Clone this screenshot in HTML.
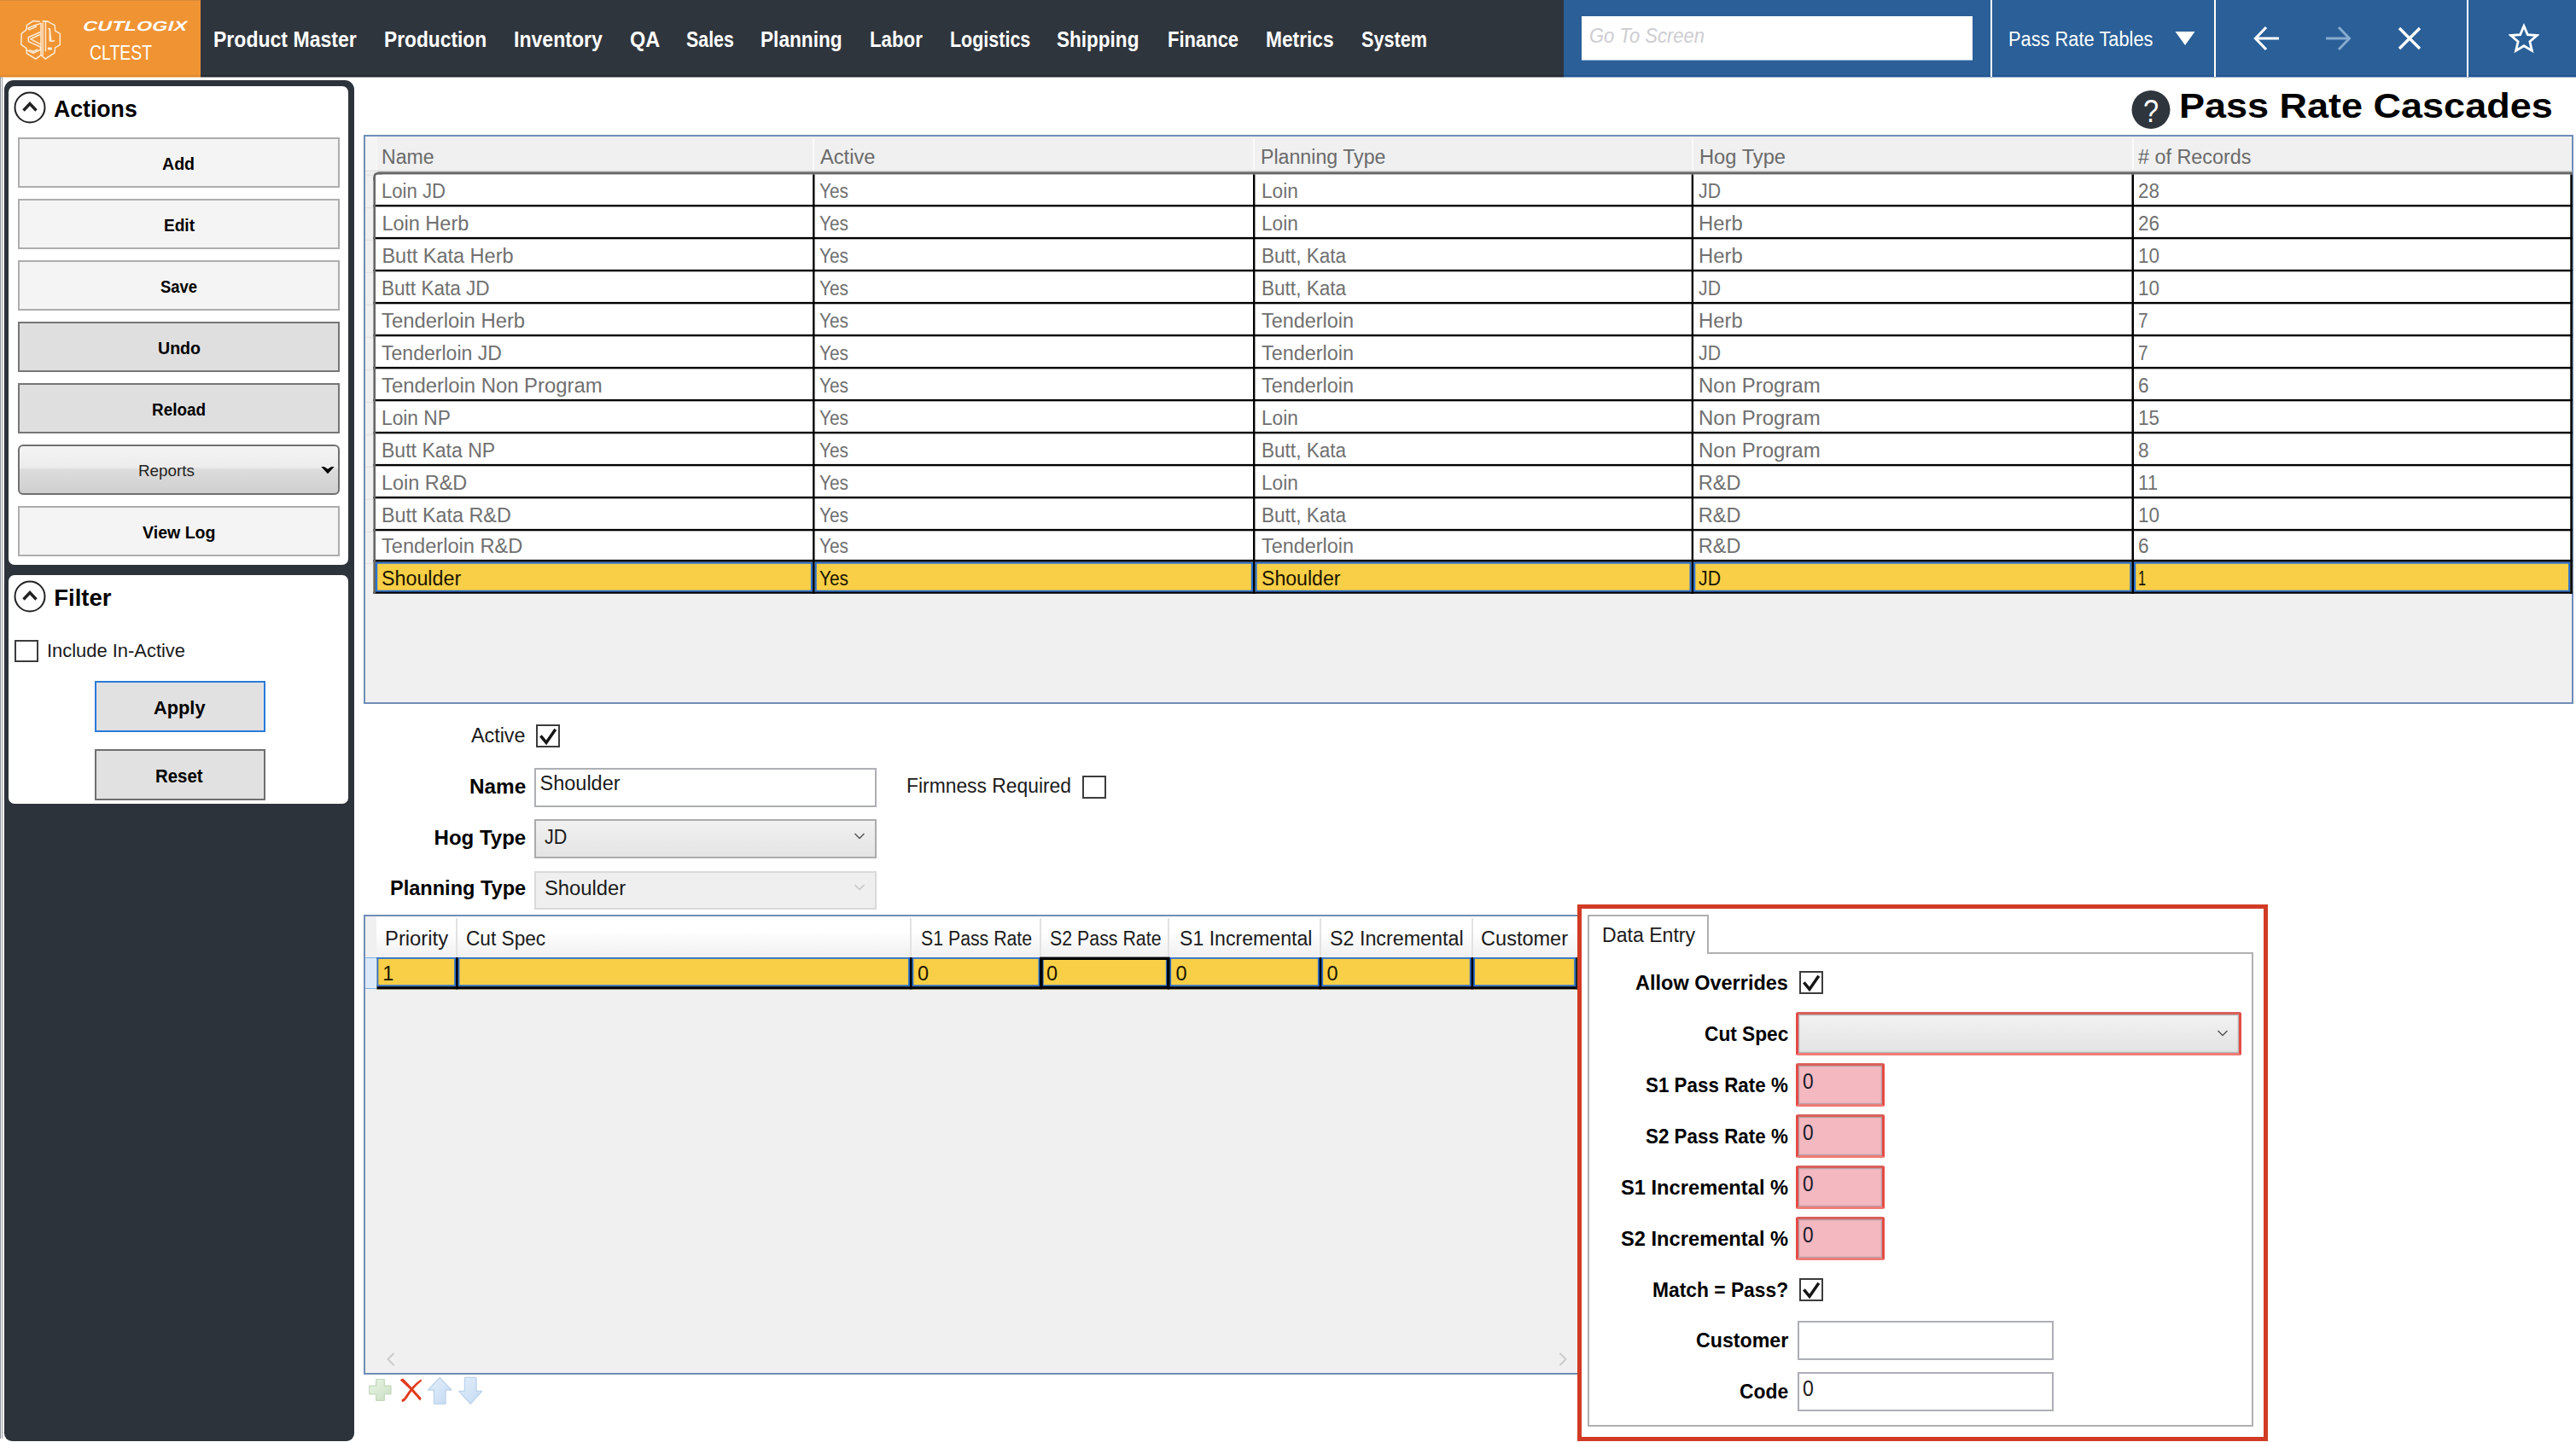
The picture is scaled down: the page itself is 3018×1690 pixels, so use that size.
<!DOCTYPE html>
<html><head><meta charset="utf-8"><title>Pass Rate Cascades</title>
<style>
html,body{margin:0;padding:0;}
body{width:3018px;height:1690px;position:relative;overflow:hidden;background:#fff;font-family:"Liberation Sans",sans-serif;}
div,span,svg{position:absolute;box-sizing:border-box;}
.t{white-space:nowrap;transform-origin:0 0;display:block;}
</style></head><body>
<div style="left:0px;top:0px;width:3018px;height:90px;background:#2f353d;"></div>
<div style="left:0px;top:88px;width:3018px;height:2px;background:#252a31;"></div>
<div style="left:0px;top:0px;width:234.5px;height:90px;background:#f09433;"></div>
<div style="left:0px;top:0px;width:234.5px;height:1px;background:#d58a3a;"></div>
<div style="left:0px;top:88px;width:234.5px;height:2px;background:#e08a30;"></div>
<div style="left:1831.5px;top:0px;width:1186.5px;height:90px;background:#2a5f98;"></div>
<div style="left:1831.5px;top:88px;width:1186.5px;height:2px;background:#22558f;"></div>
<div style="left:0px;top:90px;width:234.5px;height:1px;background:#f4c590;"></div>
<div style="left:234.5px;top:90px;width:1597px;height:1px;background:#93969b;"></div>
<div style="left:1831.5px;top:90px;width:1186.5px;height:1px;background:#90aecd;"></div>
<div style="left:1853px;top:19px;width:458px;height:52px;background:#fff;border-bottom:1px solid #9dbbd8;"></div>
<span class="t" style="left:1862.00px;top:29.00px;font-size:23.5px;line-height:26px;color:#cdcdd1;font-style:italic;transform:scaleX(0.9367);">Go To Screen</span>
<div style="left:2332px;top:0px;width:2px;height:90px;background:#ffffff;"></div>
<div style="left:2594px;top:0px;width:2px;height:90px;background:#ffffff;"></div>
<div style="left:2890px;top:0px;width:2px;height:90px;background:#ffffff;"></div>
<span class="t" style="left:2352.50px;top:32.50px;font-size:23.5px;line-height:26px;color:#fff;transform:scaleX(0.9290);">Pass Rate Tables</span>
<svg style="left:2548px;top:36px" width="24" height="18" viewBox="0 0 24 18"><path d="M0.5 1 L23.5 1 L12 17 Z" fill="#fff"/></svg>
<svg style="left:2638px;top:27px" width="36" height="36" viewBox="0 0 36 36"><path d="M32 18 H5 M17 5 L4.5 18 L17 31" fill="none" stroke="#fff" stroke-width="3.2" stroke-linecap="butt" stroke-linejoin="miter"/></svg>
<svg style="left:2721px;top:27px" width="36" height="36" viewBox="0 0 36 36"><path d="M4 18 H31 M19 5 L31.5 18 L19 31" fill="none" stroke="#86accf" stroke-width="3" stroke-linecap="butt" stroke-linejoin="miter"/></svg>
<svg style="left:2808px;top:30px" width="30" height="30" viewBox="0 0 30 30"><path d="M3 3 L27 27 M27 3 L3 27" fill="none" stroke="#fff" stroke-width="3.4"/></svg>
<svg style="left:2939px;top:27px" width="36" height="36" viewBox="0 0 36 36"><path d="M18 3.5 L22.3 13.6 L33.2 14.5 L24.9 21.7 L27.4 32.4 L18 26.7 L8.6 32.4 L11.1 21.7 L2.8 14.5 L13.7 13.6 Z" fill="none" stroke="#fff" stroke-width="2.8" stroke-linejoin="miter"/></svg>
<span class="t" style="left:250.20px;top:32.30px;font-size:25.5px;line-height:28px;color:#fff;font-weight:bold;transform:scaleX(0.9035);">Product Master</span>
<span class="t" style="left:449.90px;top:32.30px;font-size:25.5px;line-height:28px;color:#fff;font-weight:bold;transform:scaleX(0.8925);">Production</span>
<span class="t" style="left:602.00px;top:32.30px;font-size:25.5px;line-height:28px;color:#fff;font-weight:bold;transform:scaleX(0.9044);">Inventory</span>
<span class="t" style="left:737.80px;top:32.30px;font-size:25.5px;line-height:28px;color:#fff;font-weight:bold;transform:scaleX(0.9176);">QA</span>
<span class="t" style="left:803.90px;top:32.30px;font-size:25.5px;line-height:28px;color:#fff;font-weight:bold;transform:scaleX(0.8389);">Sales</span>
<span class="t" style="left:890.90px;top:32.30px;font-size:25.5px;line-height:28px;color:#fff;font-weight:bold;transform:scaleX(0.8880);">Planning</span>
<span class="t" style="left:1019.20px;top:32.30px;font-size:25.5px;line-height:28px;color:#fff;font-weight:bold;transform:scaleX(0.8724);">Labor</span>
<span class="t" style="left:1112.50px;top:32.30px;font-size:25.5px;line-height:28px;color:#fff;font-weight:bold;transform:scaleX(0.8424);">Logistics</span>
<span class="t" style="left:1238.30px;top:32.30px;font-size:25.5px;line-height:28px;color:#fff;font-weight:bold;transform:scaleX(0.8839);">Shipping</span>
<span class="t" style="left:1367.60px;top:32.30px;font-size:25.5px;line-height:28px;color:#fff;font-weight:bold;transform:scaleX(0.8624);">Finance</span>
<span class="t" style="left:1482.90px;top:32.30px;font-size:25.5px;line-height:28px;color:#fff;font-weight:bold;transform:scaleX(0.8916);">Metrics</span>
<span class="t" style="left:1594.70px;top:32.30px;font-size:25.5px;line-height:28px;color:#fff;font-weight:bold;transform:scaleX(0.8476);">System</span>
<span class="t" style="left:94.6px;top:21.3px;font-size:16.2px;line-height:18px;color:#fff;font-weight:bold;transform-origin:0 100%;transform:skewX(-17deg) scaleX(1.431);letter-spacing:0.2px">CUTLOGIX</span>
<span class="t" style="left:105.10px;top:48.80px;font-size:23.7px;line-height:26px;color:#fff;transform:scaleX(0.8214);">CLTEST</span>
<svg style="left:22px;top:21px" width="52" height="52" viewBox="0 0 52 52"><g fill="none" stroke="#fdebd6" stroke-width="1.5" stroke-linejoin="round" stroke-linecap="round">
<path d="M24.2 4.2 L17.3 3.4 L9.3 8.7 L8.9 13.9 L3.2 18.3 L2.8 31.2 L8.9 35.6 L9.3 41.6 L17.3 46.5 L20.1 48.1 L25.8 43.6"/>
<path d="M28.2 3.8 L33.8 4.2 L42.2 8.7 L42.6 15.1 L48.3 18.3 L48.3 31.6 L42.6 34.8 L41.8 41.2 L33.4 46.5 L31.4 48.1 L29 46.1 L26.2 43.6"/>
<path d="M26 6.2 V43.6 M28.2 6.2 V43.6"/>
<path d="M31.4 4.2 V38.8 M28.4 4.2 H34"/>
<path d="M25.4 6.6 L18.5 8.7 L10.9 12 M18.5 8.7 L20.5 10.3 L12.1 13.9 L10.9 12"/>
<path d="M25 16.7 L11.3 22.7 V27.6 L25.4 34 V37.2 L16.9 41.2 L10.1 38"/>
<path d="M25 19.5 L13.7 24.7 L25.4 30.8"/>
<path d="M21.7 37.2 L16.9 39.2 L12.9 37.6"/>
<path d="M34.8 12.7 H36.4 L37.8 27.6 L41.4 26.8 M36.2 14 V27"/>
<path d="M34.6 35.2 H38.2 V36.8 H34.6 Z"/>
</g></svg>
<div style="left:0px;top:90px;width:1.4px;height:1596px;background:#8c9096;"></div>
<div style="left:2.3px;top:90px;width:0.9px;height:1596px;background:#9a9ea4;"></div>
<div style="left:4.7px;top:94.4px;width:409.9px;height:1594.2px;background:#2d333b;border-radius:11px 11px 9px 9px;"></div>
<div style="left:10.4px;top:100.5px;width:398px;height:561.7px;background:#fff;border-radius:7px;"></div>
<div style="left:10.4px;top:674px;width:398px;height:268px;background:#fff;border-radius:7px;"></div>
<svg style="left:15px;top:105.5px" width="40" height="40" viewBox="0 0 40 40"><circle cx="20" cy="20" r="17.5" fill="#fff" stroke="#222" stroke-width="2"/><path d="M12.5 23.5 L20 15.5 L27.5 23.5" fill="none" stroke="#222" stroke-width="3.4"/></svg>
<span class="t" style="left:63.20px;top:111.60px;font-size:27.5px;line-height:31px;color:#000;font-weight:bold;transform:scaleX(0.9688);">Actions</span>
<svg style="left:15px;top:679px" width="40" height="40" viewBox="0 0 40 40"><circle cx="20" cy="20" r="17.5" fill="#fff" stroke="#222" stroke-width="2"/><path d="M12.5 23.5 L20 15.5 L27.5 23.5" fill="none" stroke="#222" stroke-width="3.4"/></svg>
<span class="t" style="left:63.20px;top:685.00px;font-size:27.5px;line-height:31px;color:#000;font-weight:bold;">Filter</span>
<div style="left:21px;top:161px;width:377px;height:59px;background:#f4f4f4;border:2px solid #adadad;"></div>
<span class="t" style="left:190.40px;top:181.00px;font-size:20px;line-height:22px;color:#000;font-weight:bold;transform:scaleX(0.9799);">Add</span>
<div style="left:21px;top:233px;width:377px;height:59px;background:#f4f4f4;border:2px solid #adadad;"></div>
<span class="t" style="left:191.50px;top:253.00px;font-size:20px;line-height:22px;color:#000;font-weight:bold;transform:scaleX(0.9529);">Edit</span>
<div style="left:21px;top:305px;width:377px;height:59px;background:#f4f4f4;border:2px solid #adadad;"></div>
<span class="t" style="left:188.00px;top:325.00px;font-size:20px;line-height:22px;color:#000;font-weight:bold;transform:scaleX(0.9208);">Save</span>
<div style="left:21px;top:377px;width:377px;height:59px;background:#dfdfdf;border:2px solid #767676;"></div>
<span class="t" style="left:184.50px;top:397.00px;font-size:20px;line-height:22px;color:#000;font-weight:bold;transform:scaleX(0.9785);">Undo</span>
<div style="left:21px;top:449px;width:377px;height:59px;background:#dfdfdf;border:2px solid #767676;"></div>
<span class="t" style="left:178.00px;top:469.00px;font-size:20px;line-height:22px;color:#000;font-weight:bold;transform:scaleX(0.9448);">Reload</span>
<div style="left:21px;top:521px;width:377px;height:59px;border:2px solid #707070;border-radius:6px;background:linear-gradient(#f4f4f4 0%,#ececec 45%,#dcdcdc 50%,#cfcfcf 100%);"></div>
<span class="t" style="left:161.50px;top:540.50px;font-size:18.5px;line-height:21px;color:#222;transform:scaleX(1.0175);">Reports</span>
<svg style="left:376px;top:545px" width="16" height="12" viewBox="0 0 16 12"><path d="M0.3 2 L8 10.3 L15.7 2 L12.2 2 L8 4.8 L3.8 2 Z" fill="#000"/></svg>
<div style="left:21px;top:593px;width:377px;height:59px;background:#f4f4f4;border:2px solid #adadad;"></div>
<span class="t" style="left:166.50px;top:613.00px;font-size:20px;line-height:22px;color:#000;font-weight:bold;transform:scaleX(0.9780);">View Log</span>
<div style="left:16.6px;top:750.3px;width:28px;height:25.7px;background:#fff;border:2px solid #3c3c3c;"></div>
<span class="t" style="left:55.00px;top:750.80px;font-size:21.5px;line-height:24px;color:#1a1a1a;transform:scaleX(1.0192);">Include In-Active</span>
<div style="left:111px;top:798px;width:200px;height:60px;background:#e1e1e1;border:2.5px solid #2a7ad8;"></div>
<span class="t" style="left:179.50px;top:816.50px;font-size:22.5px;line-height:25px;color:#000;font-weight:bold;transform:scaleX(0.9679);">Apply</span>
<div style="left:111px;top:878px;width:200px;height:60px;background:#e1e1e1;border:2px solid #6f6f6f;"></div>
<span class="t" style="left:181.50px;top:896.50px;font-size:22.5px;line-height:25px;color:#000;font-weight:bold;transform:scaleX(0.9055);">Reset</span>
<svg style="left:2497px;top:106px" width="46" height="46" viewBox="0 0 46 46"><circle cx="23" cy="22.5" r="22.5" fill="#2f353d"/></svg>
<span class="t" style="left:2510.60px;top:109.60px;font-size:37px;line-height:41px;color:#fff;transform:scaleX(0.8798);">?</span>
<span class="t" style="left:2552.50px;top:101.90px;font-size:40px;line-height:44px;color:#000;font-weight:bold;transform:scaleX(1.1247);">Pass Rate Cascades</span>
<div style="left:426px;top:158px;width:2589px;height:667px;background:#f0f0f0;border:2px solid #6f8eb8;"></div>
<div style="left:428px;top:160px;width:12.5px;height:40px;background:#f4f4f4;"></div>
<div style="left:440.5px;top:160px;width:1px;height:40px;background:#f9f9f9;"></div>
<div style="left:952px;top:162px;width:2px;height:39px;background:#fafafa;"></div>
<div style="left:1468px;top:162px;width:2px;height:39px;background:#fafafa;"></div>
<div style="left:1982px;top:162px;width:2px;height:39px;background:#fafafa;"></div>
<div style="left:2498px;top:162px;width:2px;height:39px;background:#fafafa;"></div>
<span class="t" style="left:447.40px;top:171.20px;font-size:23.5px;line-height:26px;color:#6a6a6a;transform:scaleX(0.9825);">Name</span>
<span class="t" style="left:960.60px;top:171.20px;font-size:23.5px;line-height:26px;color:#6a6a6a;transform:scaleX(1.0064);">Active</span>
<span class="t" style="left:1476.90px;top:171.20px;font-size:23.5px;line-height:26px;color:#6a6a6a;transform:scaleX(0.9857);">Planning Type</span>
<span class="t" style="left:1990.70px;top:171.20px;font-size:23.5px;line-height:26px;color:#6a6a6a;transform:scaleX(1.0084);">Hog Type</span>
<span class="t" style="left:2505.00px;top:171.20px;font-size:23.5px;line-height:26px;color:#6a6a6a;transform:scaleX(0.9938);"># of Records</span>
<svg style="left:0;top:0" width="3018" height="830" viewBox="0 0 3018 830"><rect x="437.40" y="202.00" width="2576.40" height="493.80" fill="#fff"/><rect x="437.40" y="658.50" width="2576.40" height="35.50" fill="#f8cf46"/><rect x="441.10" y="659.6" width="509.90" height="33.2" fill="none" stroke="#2770d6" stroke-width="2.2"/><rect x="955.60" y="659.6" width="511.30" height="33.2" fill="none" stroke="#2770d6" stroke-width="2.2"/><rect x="1471.50" y="659.6" width="509.10" height="33.2" fill="none" stroke="#2770d6" stroke-width="2.2"/><rect x="1985.15" y="659.6" width="511.25" height="33.2" fill="none" stroke="#2770d6" stroke-width="2.2"/><rect x="2501.10" y="659.6" width="509.10" height="33.2" fill="none" stroke="#2770d6" stroke-width="2.2"/><rect x="428.50" y="204.60" width="8.90" height="1.60" fill="#e3e3e3"/><rect x="428.50" y="242.60" width="8.90" height="1.60" fill="#e3e3e3"/><rect x="428.50" y="280.60" width="8.90" height="1.60" fill="#e3e3e3"/><rect x="428.50" y="318.60" width="8.90" height="1.60" fill="#e3e3e3"/><rect x="428.50" y="356.60" width="8.90" height="1.60" fill="#e3e3e3"/><rect x="428.50" y="394.60" width="8.90" height="1.60" fill="#e3e3e3"/><rect x="428.50" y="432.60" width="8.90" height="1.60" fill="#e3e3e3"/><rect x="428.50" y="470.60" width="8.90" height="1.60" fill="#e3e3e3"/><rect x="428.50" y="508.60" width="8.90" height="1.60" fill="#e3e3e3"/><rect x="428.50" y="546.60" width="8.90" height="1.60" fill="#e3e3e3"/><rect x="428.50" y="584.60" width="8.90" height="1.60" fill="#e3e3e3"/><rect x="428.50" y="622.60" width="8.90" height="1.60" fill="#e3e3e3"/><rect x="428.50" y="659.60" width="8.90" height="1.60" fill="#e3e3e3"/><rect x="428.00" y="199.80" width="2585.80" height="1.00" fill="#dcdcdc"/><rect x="437.40" y="200.80" width="2576.40" height="1.20" fill="#9a9a9a"/><rect x="437.40" y="202.00" width="2576.40" height="2.40" fill="#666"/><rect x="437.40" y="239.90" width="2576.40" height="2.40" fill="#000"/><rect x="437.40" y="277.90" width="2576.40" height="2.40" fill="#000"/><rect x="437.40" y="315.90" width="2576.40" height="2.40" fill="#000"/><rect x="437.40" y="353.90" width="2576.40" height="2.40" fill="#000"/><rect x="437.40" y="391.90" width="2576.40" height="2.40" fill="#000"/><rect x="437.40" y="429.90" width="2576.40" height="2.40" fill="#000"/><rect x="437.40" y="467.90" width="2576.40" height="2.40" fill="#000"/><rect x="437.40" y="505.90" width="2576.40" height="2.40" fill="#000"/><rect x="437.40" y="543.90" width="2576.40" height="2.40" fill="#000"/><rect x="437.40" y="581.90" width="2576.40" height="2.40" fill="#000"/><rect x="437.40" y="619.90" width="2576.40" height="2.40" fill="#000"/><rect x="437.40" y="655.90" width="2576.40" height="2.60" fill="#000"/><rect x="437.40" y="693.60" width="2576.40" height="2.20" fill="#000"/><rect x="437.40" y="202.60" width="2.60" height="493.20" fill="#666"/><rect x="952.10" y="204.40" width="2.40" height="491.40" fill="#000"/><rect x="1468.00" y="204.40" width="2.40" height="491.40" fill="#000"/><rect x="1981.70" y="204.40" width="2.35" height="491.40" fill="#000"/><rect x="2497.50" y="204.40" width="2.50" height="491.40" fill="#000"/><rect x="3011.30" y="204.40" width="2.50" height="491.40" fill="#000"/><rect x="437" y="200.6" width="5.5" height="6.4" fill="#f0f0f0"/><path d="M440 212 V207.6 Q440 204.4 443.4 204.4 H448 V212 Z" fill="#fff"/><path d="M438.7 212 V207.4 Q438.7 203.2 443 203.2 H448" fill="none" stroke="#666" stroke-width="2.5"/></svg>
<span class="t" style="left:447.40px;top:211.00px;font-size:23.5px;line-height:26px;color:#707070;transform:scaleX(0.9412);">Loin JD</span>
<span class="t" style="left:960.40px;top:211.00px;font-size:23.5px;line-height:26px;color:#707070;transform:scaleX(0.8871);">Yes</span>
<span class="t" style="left:1477.60px;top:211.00px;font-size:23.5px;line-height:26px;color:#707070;transform:scaleX(0.9631);">Loin</span>
<span class="t" style="left:1989.80px;top:211.00px;font-size:23.5px;line-height:26px;color:#707070;transform:scaleX(0.9054);">JD</span>
<span class="t" style="left:2505.40px;top:211.00px;font-size:23.5px;line-height:26px;color:#707070;transform:scaleX(0.9529);">28</span>
<span class="t" style="left:447.40px;top:249.00px;font-size:23.5px;line-height:26px;color:#707070;">Loin Herb</span>
<span class="t" style="left:960.40px;top:249.00px;font-size:23.5px;line-height:26px;color:#707070;transform:scaleX(0.8871);">Yes</span>
<span class="t" style="left:1477.60px;top:249.00px;font-size:23.5px;line-height:26px;color:#707070;transform:scaleX(0.9631);">Loin</span>
<span class="t" style="left:1989.80px;top:249.00px;font-size:23.5px;line-height:26px;color:#707070;transform:scaleX(1.0148);">Herb</span>
<span class="t" style="left:2505.40px;top:249.00px;font-size:23.5px;line-height:26px;color:#707070;transform:scaleX(0.9529);">26</span>
<span class="t" style="left:447.40px;top:287.00px;font-size:23.5px;line-height:26px;color:#707070;">Butt Kata Herb</span>
<span class="t" style="left:960.40px;top:287.00px;font-size:23.5px;line-height:26px;color:#707070;transform:scaleX(0.8871);">Yes</span>
<span class="t" style="left:1477.60px;top:287.00px;font-size:23.5px;line-height:26px;color:#707070;transform:scaleX(0.9602);">Butt, Kata</span>
<span class="t" style="left:1989.80px;top:287.00px;font-size:23.5px;line-height:26px;color:#707070;transform:scaleX(1.0148);">Herb</span>
<span class="t" style="left:2505.40px;top:287.00px;font-size:23.5px;line-height:26px;color:#707070;transform:scaleX(0.9529);">10</span>
<span class="t" style="left:447.40px;top:325.00px;font-size:23.5px;line-height:26px;color:#707070;transform:scaleX(0.9596);">Butt Kata JD</span>
<span class="t" style="left:960.40px;top:325.00px;font-size:23.5px;line-height:26px;color:#707070;transform:scaleX(0.8871);">Yes</span>
<span class="t" style="left:1477.60px;top:325.00px;font-size:23.5px;line-height:26px;color:#707070;transform:scaleX(0.9602);">Butt, Kata</span>
<span class="t" style="left:1989.80px;top:325.00px;font-size:23.5px;line-height:26px;color:#707070;transform:scaleX(0.9054);">JD</span>
<span class="t" style="left:2505.40px;top:325.00px;font-size:23.5px;line-height:26px;color:#707070;transform:scaleX(0.9529);">10</span>
<span class="t" style="left:447.40px;top:363.00px;font-size:23.5px;line-height:26px;color:#707070;transform:scaleX(1.0132);">Tenderloin Herb</span>
<span class="t" style="left:960.40px;top:363.00px;font-size:23.5px;line-height:26px;color:#707070;transform:scaleX(0.8871);">Yes</span>
<span class="t" style="left:1477.60px;top:363.00px;font-size:23.5px;line-height:26px;color:#707070;transform:scaleX(0.9960);">Tenderloin</span>
<span class="t" style="left:1989.80px;top:363.00px;font-size:23.5px;line-height:26px;color:#707070;transform:scaleX(1.0148);">Herb</span>
<span class="t" style="left:2505.40px;top:363.00px;font-size:23.5px;line-height:26px;color:#707070;transform:scaleX(0.8878);">7</span>
<span class="t" style="left:447.40px;top:401.00px;font-size:23.5px;line-height:26px;color:#707070;transform:scaleX(0.9807);">Tenderloin JD</span>
<span class="t" style="left:960.40px;top:401.00px;font-size:23.5px;line-height:26px;color:#707070;transform:scaleX(0.8871);">Yes</span>
<span class="t" style="left:1477.60px;top:401.00px;font-size:23.5px;line-height:26px;color:#707070;transform:scaleX(0.9960);">Tenderloin</span>
<span class="t" style="left:1989.80px;top:401.00px;font-size:23.5px;line-height:26px;color:#707070;transform:scaleX(0.9054);">JD</span>
<span class="t" style="left:2505.40px;top:401.00px;font-size:23.5px;line-height:26px;color:#707070;transform:scaleX(0.8878);">7</span>
<span class="t" style="left:447.40px;top:439.00px;font-size:23.5px;line-height:26px;color:#707070;transform:scaleX(1.0152);">Tenderloin Non Program</span>
<span class="t" style="left:960.40px;top:439.00px;font-size:23.5px;line-height:26px;color:#707070;transform:scaleX(0.8871);">Yes</span>
<span class="t" style="left:1477.60px;top:439.00px;font-size:23.5px;line-height:26px;color:#707070;transform:scaleX(0.9960);">Tenderloin</span>
<span class="t" style="left:1989.80px;top:439.00px;font-size:23.5px;line-height:26px;color:#707070;transform:scaleX(1.0204);">Non Program</span>
<span class="t" style="left:2505.40px;top:439.00px;font-size:23.5px;line-height:26px;color:#707070;transform:scaleX(0.9643);">6</span>
<span class="t" style="left:447.40px;top:477.00px;font-size:23.5px;line-height:26px;color:#707070;transform:scaleX(0.9664);">Loin NP</span>
<span class="t" style="left:960.40px;top:477.00px;font-size:23.5px;line-height:26px;color:#707070;transform:scaleX(0.8871);">Yes</span>
<span class="t" style="left:1477.60px;top:477.00px;font-size:23.5px;line-height:26px;color:#707070;transform:scaleX(0.9631);">Loin</span>
<span class="t" style="left:1989.80px;top:477.00px;font-size:23.5px;line-height:26px;color:#707070;transform:scaleX(1.0204);">Non Program</span>
<span class="t" style="left:2505.40px;top:477.00px;font-size:23.5px;line-height:26px;color:#707070;transform:scaleX(0.9529);">15</span>
<span class="t" style="left:447.40px;top:515.00px;font-size:23.5px;line-height:26px;color:#707070;transform:scaleX(0.9805);">Butt Kata NP</span>
<span class="t" style="left:960.40px;top:515.00px;font-size:23.5px;line-height:26px;color:#707070;transform:scaleX(0.8871);">Yes</span>
<span class="t" style="left:1477.60px;top:515.00px;font-size:23.5px;line-height:26px;color:#707070;transform:scaleX(0.9602);">Butt, Kata</span>
<span class="t" style="left:1989.80px;top:515.00px;font-size:23.5px;line-height:26px;color:#707070;transform:scaleX(1.0204);">Non Program</span>
<span class="t" style="left:2505.40px;top:515.00px;font-size:23.5px;line-height:26px;color:#707070;transform:scaleX(0.9643);">8</span>
<span class="t" style="left:447.40px;top:553.00px;font-size:23.5px;line-height:26px;color:#707070;transform:scaleX(0.9962);">Loin R&amp;D</span>
<span class="t" style="left:960.40px;top:553.00px;font-size:23.5px;line-height:26px;color:#707070;transform:scaleX(0.8871);">Yes</span>
<span class="t" style="left:1477.60px;top:553.00px;font-size:23.5px;line-height:26px;color:#707070;transform:scaleX(0.9631);">Loin</span>
<span class="t" style="left:1989.80px;top:553.00px;font-size:23.5px;line-height:26px;color:#707070;">R&amp;D</span>
<span class="t" style="left:2505.40px;top:553.00px;font-size:23.5px;line-height:26px;color:#707070;transform:scaleX(0.9470);">11</span>
<span class="t" style="left:447.40px;top:591.00px;font-size:23.5px;line-height:26px;color:#707070;transform:scaleX(0.9933);">Butt Kata R&amp;D</span>
<span class="t" style="left:960.40px;top:591.00px;font-size:23.5px;line-height:26px;color:#707070;transform:scaleX(0.8871);">Yes</span>
<span class="t" style="left:1477.60px;top:591.00px;font-size:23.5px;line-height:26px;color:#707070;transform:scaleX(0.9602);">Butt, Kata</span>
<span class="t" style="left:1989.80px;top:591.00px;font-size:23.5px;line-height:26px;color:#707070;">R&amp;D</span>
<span class="t" style="left:2505.40px;top:591.00px;font-size:23.5px;line-height:26px;color:#707070;transform:scaleX(0.9529);">10</span>
<span class="t" style="left:447.40px;top:626.90px;font-size:23.5px;line-height:26px;color:#707070;transform:scaleX(1.0050);">Tenderloin R&amp;D</span>
<span class="t" style="left:960.40px;top:626.90px;font-size:23.5px;line-height:26px;color:#707070;transform:scaleX(0.8871);">Yes</span>
<span class="t" style="left:1477.60px;top:626.90px;font-size:23.5px;line-height:26px;color:#707070;transform:scaleX(0.9960);">Tenderloin</span>
<span class="t" style="left:1989.80px;top:626.90px;font-size:23.5px;line-height:26px;color:#707070;">R&amp;D</span>
<span class="t" style="left:2505.40px;top:626.90px;font-size:23.5px;line-height:26px;color:#707070;transform:scaleX(0.9643);">6</span>
<span class="t" style="left:447.40px;top:665.00px;font-size:23.5px;line-height:26px;color:#1a1400;transform:scaleX(0.9907);">Shoulder</span>
<span class="t" style="left:960.40px;top:665.00px;font-size:23.5px;line-height:26px;color:#1a1400;transform:scaleX(0.8871);">Yes</span>
<span class="t" style="left:1477.60px;top:665.00px;font-size:23.5px;line-height:26px;color:#1a1400;transform:scaleX(0.9833);">Shoulder</span>
<span class="t" style="left:1989.80px;top:665.00px;font-size:23.5px;line-height:26px;color:#1a1400;transform:scaleX(0.9054);">JD</span>
<span class="t" style="left:2505.40px;top:665.00px;font-size:23.5px;line-height:26px;color:#1a1400;transform:scaleX(0.7000);">1</span>
<span class="t" style="left:552.30px;top:849.00px;font-size:23.5px;line-height:26px;color:#1a1a1a;transform:scaleX(0.9908);">Active</span>
<div style="left:628px;top:848.5px;width:28px;height:27px;background:#fff;border:2px solid #3c3c3c;"></div>
<svg style="left:628px;top:848.5px" width="28" height="27" viewBox="0 0 28 27"><path d="M5.4 13.4 L12 21.4 L22.8 5.8" fill="none" stroke="#151515" stroke-width="3.5" stroke-linejoin="miter"/></svg>
<span class="t" style="left:550.10px;top:907.60px;font-size:24px;line-height:27px;color:#000;font-weight:bold;transform:scaleX(1.0126);">Name</span>
<div style="left:626px;top:900px;width:400.5px;height:45.5px;background:#fff;border:2px solid #adafb4;"></div>
<span class="t" style="left:632.50px;top:904.60px;font-size:23.5px;line-height:26px;color:#1a1a1a;">Shoulder</span>
<span class="t" style="left:1062.10px;top:908.00px;font-size:23.5px;line-height:26px;color:#1a1a1a;transform:scaleX(0.9723);">Firmness Required</span>
<div style="left:1268px;top:908.5px;width:28px;height:27px;background:#fff;border:2px solid #3c3c3c;"></div>
<span class="t" style="left:508.60px;top:967.60px;font-size:24px;line-height:27px;color:#000;font-weight:bold;">Hog Type</span>
<div style="left:626px;top:960px;width:400.5px;height:45.5px;border:2px solid #acacac;background:linear-gradient(#f1f1f1,#e4e4e4);"></div>
<span class="t" style="left:637.50px;top:968.00px;font-size:23.5px;line-height:26px;color:#1a1a1a;transform:scaleX(0.9158);">JD</span>
<svg style="left:1000px;top:975px" width="14" height="10" viewBox="0 0 14 10"><path d="M1.5 2 L7 7.5 L12.5 2" fill="none" stroke="#555" stroke-width="1.5"/></svg>
<span class="t" style="left:457.10px;top:1026.90px;font-size:24px;line-height:27px;color:#000;font-weight:bold;transform:scaleX(0.9813);">Planning Type</span>
<div style="left:626px;top:1021px;width:400.5px;height:44.5px;background:#efefef;border:2px solid #d9d9d9;"></div>
<span class="t" style="left:638.20px;top:1027.90px;font-size:23.5px;line-height:26px;color:#1a1a1a;transform:scaleX(1.0120);">Shoulder</span>
<svg style="left:1000px;top:1035px" width="14" height="10" viewBox="0 0 14 10"><path d="M1.5 2 L7 7.5 L12.5 2" fill="none" stroke="#c4c4c4" stroke-width="1.5"/></svg>
<div style="left:426px;top:1072px;width:1422px;height:539px;background:#f0f0f0;border:2px solid #6f8eb8;border-right:none;"></div>
<div style="left:428px;top:1074px;width:1420px;height:48px;background:linear-gradient(#ffffff 0%,#ffffff 35%,#f0f0f0 100%);"></div>
<div style="left:428px;top:1074px;width:13px;height:48px;background:#f0f0f0;"></div>
<div style="left:534px;top:1076px;width:2px;height:46px;background:#e2e2e2;"></div>
<div style="left:1066px;top:1076px;width:2px;height:46px;background:#e2e2e2;"></div>
<div style="left:1218px;top:1076px;width:2px;height:46px;background:#e2e2e2;"></div>
<div style="left:1368px;top:1076px;width:2px;height:46px;background:#e2e2e2;"></div>
<div style="left:1546px;top:1076px;width:2px;height:46px;background:#e2e2e2;"></div>
<div style="left:1724px;top:1076px;width:2px;height:46px;background:#e2e2e2;"></div>
<span class="t" style="left:450.90px;top:1086.60px;font-size:23.5px;line-height:26px;color:#1a1a1a;transform:scaleX(1.0136);">Priority</span>
<span class="t" style="left:546.00px;top:1086.60px;font-size:23.5px;line-height:26px;color:#1a1a1a;transform:scaleX(0.9642);">Cut Spec</span>
<span class="t" style="left:1078.80px;top:1086.60px;font-size:23.5px;line-height:26px;color:#1a1a1a;transform:scaleX(0.9055);">S1 Pass Rate</span>
<span class="t" style="left:1229.90px;top:1086.60px;font-size:23.5px;line-height:26px;color:#1a1a1a;transform:scaleX(0.9083);">S2 Pass Rate</span>
<span class="t" style="left:1381.70px;top:1086.60px;font-size:23.5px;line-height:26px;color:#1a1a1a;transform:scaleX(0.9832);">S1 Incremental</span>
<span class="t" style="left:1558.00px;top:1086.60px;font-size:23.5px;line-height:26px;color:#1a1a1a;transform:scaleX(0.9908);">S2 Incremental</span>
<span class="t" style="left:1735.10px;top:1086.60px;font-size:23.5px;line-height:26px;color:#1a1a1a;">Customer</span>
<div style="left:428px;top:1122px;width:13.5px;height:37px;background:#dbe9f9;border-top:1.5px solid #7fb0ea;border-bottom:1.5px solid #7fb0ea;"></div>
<svg style="left:0;top:1100px" width="1848" height="80" viewBox="0 1100 1848 80"><rect x="441.50" y="1122.00" width="1406.50" height="37.40" fill="#f8cf46"/><rect x="441.50" y="1122.00" width="1406.50" height="1.80" fill="#2a6fd0"/><rect x="441.50" y="1154.30" width="1406.50" height="1.90" fill="#2a6fd0"/><rect x="441.50" y="1156.20" width="1406.50" height="3.20" fill="#000"/><rect x="441.50" y="1122.00" width="1.80" height="34.00" fill="#2a6fd0"/><rect x="532.20" y="1122.00" width="6.20" height="34.00" fill="#2a6fd0"/><rect x="534.00" y="1122.00" width="2.60" height="37.40" fill="#000"/><rect x="1064.10" y="1122.00" width="6.20" height="34.00" fill="#2a6fd0"/><rect x="1065.90" y="1122.00" width="2.60" height="37.40" fill="#000"/><rect x="1216.50" y="1122.00" width="6.20" height="34.00" fill="#2a6fd0"/><rect x="1218.30" y="1122.00" width="2.60" height="37.40" fill="#000"/><rect x="1365.90" y="1122.00" width="6.20" height="34.00" fill="#2a6fd0"/><rect x="1367.70" y="1122.00" width="2.60" height="37.40" fill="#000"/><rect x="1543.90" y="1122.00" width="6.20" height="34.00" fill="#2a6fd0"/><rect x="1545.70" y="1122.00" width="2.60" height="37.40" fill="#000"/><rect x="1721.80" y="1122.00" width="6.20" height="34.00" fill="#2a6fd0"/><rect x="1723.60" y="1122.00" width="2.60" height="37.40" fill="#000"/><rect x="1844.20" y="1122.00" width="1.90" height="34.00" fill="#2a6fd0"/><rect x="1846.10" y="1122.00" width="1.90" height="37.40" fill="#10202a"/><rect x="1220.0" y="1123.3" width="148.7" height="34" fill="none" stroke="#000" stroke-width="3.4"/></svg>
<span class="t" style="left:448.20px;top:1127.80px;font-size:23.5px;line-height:26px;color:#1a1400;">1</span>
<span class="t" style="left:1075.10px;top:1127.80px;font-size:23.5px;line-height:26px;color:#1a1400;">0</span>
<span class="t" style="left:1226.00px;top:1127.80px;font-size:23.5px;line-height:26px;color:#1a1400;">0</span>
<span class="t" style="left:1377.50px;top:1127.80px;font-size:23.5px;line-height:26px;color:#1a1400;">0</span>
<span class="t" style="left:1554.50px;top:1127.80px;font-size:23.5px;line-height:26px;color:#1a1400;">0</span>
<svg style="left:452px;top:1584px" width="12" height="18" viewBox="0 0 12 18"><path d="M9.5 2 L2.5 9 L9.5 16" fill="none" stroke="#c9c9c9" stroke-width="1.8"/></svg>
<svg style="left:1825px;top:1584px" width="12" height="18" viewBox="0 0 12 18"><path d="M2.5 2 L9.5 9 L2.5 16" fill="none" stroke="#c9c9c9" stroke-width="1.8"/></svg>
<svg style="left:431px;top:1614px" width="30" height="30" viewBox="0 0 30 30"><defs><linearGradient id="gp" x1="0" y1="0" x2="1" y2="1"><stop offset="0" stop-color="#e9f5e5"/><stop offset="1" stop-color="#c9dfc3"/></linearGradient></defs><path d="M9.7 2.5 H19.3 V10.2 H27 V19.8 H19.3 V27.3 H9.7 V19.8 H1.7 V10.2 H9.7 Z" fill="url(#gp)" stroke="#c2d8bb" stroke-width="1.2" stroke-linejoin="round"/></svg>
<svg style="left:466px;top:1613px" width="32" height="32" viewBox="0 0 32 32"><g fill="#e23a1f"><path d="M2.6 4.2 L6.2 2.4 Q14 10 27.6 25.6 L26.4 28.4 Q24.6 27.8 22.6 24.6 Q14 14 2.6 4.2 Z"/><path d="M28.2 5.2 L27.2 3.6 Q18 9 7.4 25.4 L4.4 27.4 L5.2 30.2 Q8.4 29.6 10.6 26 Q18 13.6 28.2 5.2 Z"/></g></svg>
<svg style="left:499px;top:1612px" width="32" height="36" viewBox="0 0 32 36"><defs><linearGradient id="ga" x1="0" y1="0" x2="1" y2="1"><stop offset="0" stop-color="#e3effb"/><stop offset="1" stop-color="#c3daf2"/></linearGradient></defs><path d="M16.2 2.4 L29.8 17 H23 V32.4 Q23 33.4 22 33.4 H10.4 Q9.4 33.4 9.4 32.4 V17 H2.6 Z" fill="url(#ga)" stroke="#bcd3ec" stroke-width="1.3" stroke-linejoin="round"/></svg>
<svg style="left:535px;top:1612px" width="32" height="36" viewBox="0 0 32 36"><path d="M16.2 33.4 L29.8 18.4 H23 V3.4 Q23 2.4 22 2.4 H10.4 Q9.4 2.4 9.4 3.4 V18.4 H2.6 Z" fill="url(#ga)" stroke="#bcd3ec" stroke-width="1.3" stroke-linejoin="round"/></svg>
<div style="left:1848px;top:1060px;width:809px;height:629px;background:#fff;border:5px solid #d13b25;"></div>
<div style="left:1860px;top:1116px;width:780px;height:555.5px;background:#fff;border:2px solid #b0b0b0;"></div>
<div style="left:1860px;top:1072px;width:142px;height:46px;background:#fff;border:2px solid #b0b0b0;border-bottom:none;"></div>
<span class="t" style="left:1876.60px;top:1083.10px;font-size:23.5px;line-height:26px;color:#1a1a1a;transform:scaleX(0.9828);">Data Entry</span>
<span class="t" style="left:1916.30px;top:1137.80px;font-size:24px;line-height:27px;color:#000;font-weight:bold;transform:scaleX(0.9790);">Allow Overrides</span>
<div style="left:2107.8px;top:1138px;width:28px;height:27px;background:#fff;border:2px solid #3c3c3c;"></div>
<svg style="left:2107.8px;top:1138px" width="28" height="27" viewBox="0 0 28 27"><path d="M5.4 13.4 L12 21.4 L22.8 5.8" fill="none" stroke="#151515" stroke-width="3.5" stroke-linejoin="miter"/></svg>
<span class="t" style="left:1996.90px;top:1198.30px;font-size:24px;line-height:27px;color:#000;font-weight:bold;transform:scaleX(0.9450);">Cut Spec</span>
<div style="left:2103.5px;top:1186.2px;width:522.4px;height:51.2px;border:3px solid;border-color:#d9605a #e64a44 #ee7c77 #e64a44;border-radius:2.5px;background:linear-gradient(#f2f2f2,#e3e3e3);box-shadow:inset 0 0 0 1.3px #b4b8b8;"></div>
<svg style="left:2597px;top:1206px" width="14" height="10" viewBox="0 0 14 10"><path d="M1.5 2 L7 7.5 L12.5 2" fill="none" stroke="#555" stroke-width="1.5"/></svg>
<span class="t" style="left:1928.40px;top:1257.70px;font-size:24px;line-height:27px;color:#000;font-weight:bold;transform:scaleX(0.9330);">S1 Pass Rate %</span>
<div style="left:2103.5px;top:1246.2px;width:104.3px;height:51.2px;background:#f4b8c1;border:3px solid;border-color:#d9605a #e64a44 #ee7c77 #e64a44;border-radius:2.5px;box-shadow:inset 0 0 0 1.3px #b9a3a8;"></div>
<span class="t" style="left:2111.60px;top:1252.00px;font-size:26.5px;line-height:30px;color:#1a1a2a;transform:scaleX(0.8552);">0</span>
<span class="t" style="left:1928.40px;top:1317.70px;font-size:24px;line-height:27px;color:#000;font-weight:bold;transform:scaleX(0.9330);">S2 Pass Rate %</span>
<div style="left:2103.5px;top:1306.2px;width:104.3px;height:51.2px;background:#f4b8c1;border:3px solid;border-color:#d9605a #e64a44 #ee7c77 #e64a44;border-radius:2.5px;box-shadow:inset 0 0 0 1.3px #b9a3a8;"></div>
<span class="t" style="left:2111.60px;top:1312.00px;font-size:26.5px;line-height:30px;color:#1a1a2a;transform:scaleX(0.8552);">0</span>
<span class="t" style="left:1899.10px;top:1377.60px;font-size:24px;line-height:27px;color:#000;font-weight:bold;transform:scaleX(0.9867);">S1 Incremental %</span>
<div style="left:2103.5px;top:1366.2px;width:104.3px;height:51.2px;background:#f4b8c1;border:3px solid;border-color:#d9605a #e64a44 #ee7c77 #e64a44;border-radius:2.5px;box-shadow:inset 0 0 0 1.3px #b9a3a8;"></div>
<span class="t" style="left:2111.60px;top:1372.00px;font-size:26.5px;line-height:30px;color:#1a1a2a;transform:scaleX(0.8552);">0</span>
<span class="t" style="left:1899.10px;top:1437.60px;font-size:24px;line-height:27px;color:#000;font-weight:bold;transform:scaleX(0.9867);">S2 Incremental %</span>
<div style="left:2103.5px;top:1426.2px;width:104.3px;height:51.2px;background:#f4b8c1;border:3px solid;border-color:#d9605a #e64a44 #ee7c77 #e64a44;border-radius:2.5px;box-shadow:inset 0 0 0 1.3px #b9a3a8;"></div>
<span class="t" style="left:2111.60px;top:1432.00px;font-size:26.5px;line-height:30px;color:#1a1a2a;transform:scaleX(0.8552);">0</span>
<span class="t" style="left:1936.10px;top:1498.00px;font-size:24px;line-height:27px;color:#000;font-weight:bold;transform:scaleX(0.9504);">Match = Pass?</span>
<div style="left:2107.8px;top:1498.3px;width:28px;height:27px;background:#fff;border:2px solid #3c3c3c;"></div>
<svg style="left:2107.8px;top:1498.3px" width="28" height="27" viewBox="0 0 28 27"><path d="M5.4 13.4 L12 21.4 L22.8 5.8" fill="none" stroke="#151515" stroke-width="3.5" stroke-linejoin="miter"/></svg>
<span class="t" style="left:1987.00px;top:1557.40px;font-size:24px;line-height:27px;color:#000;font-weight:bold;transform:scaleX(0.9658);">Customer</span>
<div style="left:2106px;top:1547.7px;width:299.6px;height:46.1px;background:#fff;border:2px solid #adafb5;"></div>
<span class="t" style="left:2038.00px;top:1617.40px;font-size:24px;line-height:27px;color:#000;font-weight:bold;transform:scaleX(0.9533);">Code</span>
<div style="left:2106px;top:1607.7px;width:299.6px;height:46.1px;background:#fff;border:2px solid #adafb5;"></div>
<span class="t" style="left:2111.50px;top:1611.80px;font-size:26.5px;line-height:30px;color:#1a1a1a;transform:scaleX(0.8687);">0</span>
</body></html>
